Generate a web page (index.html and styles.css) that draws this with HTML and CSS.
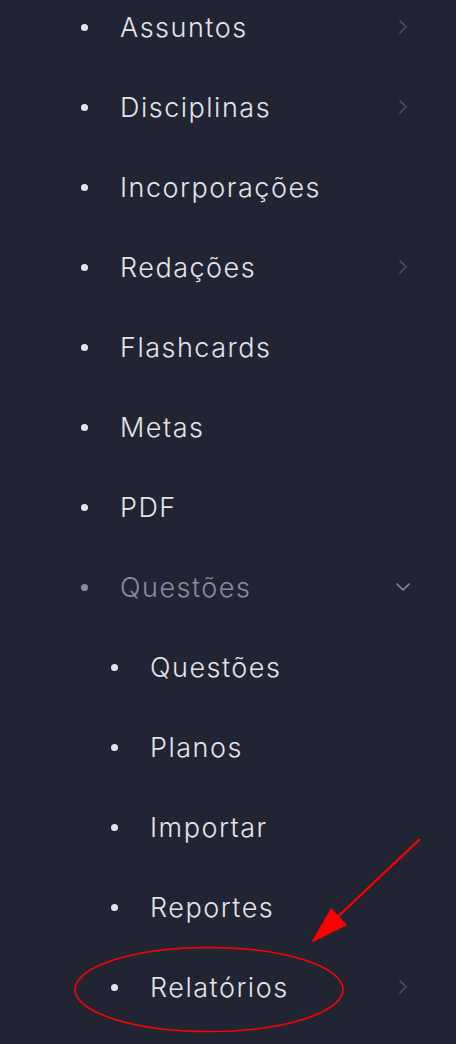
FILE: index.html
```html
<!DOCTYPE html>
<html lang="pt">
<head>
<meta charset="utf-8">
<link rel="stylesheet" href="styles.css">
</head>
<body>
<nav class="menu">
  <ul class="list">
    <li class="item"><span class="dot"></span><span class="label">Assuntos</span><svg class="chev" viewBox="0 0 10 16"><path d="M1.5 1.5 L8 8 L1.5 14.5"/></svg></li>
    <li class="item"><span class="dot"></span><span class="label">Disciplinas</span><svg class="chev" viewBox="0 0 10 16"><path d="M1.5 1.5 L8 8 L1.5 14.5"/></svg></li>
    <li class="item"><span class="dot"></span><span class="label">Incorporações</span></li>
    <li class="item"><span class="dot"></span><span class="label">Redações</span><svg class="chev" viewBox="0 0 10 16"><path d="M1.5 1.5 L8 8 L1.5 14.5"/></svg></li>
    <li class="item"><span class="dot"></span><span class="label">Flashcards</span></li>
    <li class="item"><span class="dot"></span><span class="label">Metas</span></li>
    <li class="item"><span class="dot"></span><span class="label">PDF</span></li>
    <li class="item active"><span class="dot"></span><span class="label">Questões</span><svg class="chev down" viewBox="0 0 16 10"><path d="M1.5 1.5 L8 8 L14.5 1.5"/></svg></li>
    <li class="item sub"><span class="dot"></span><span class="label">Questões</span></li>
    <li class="item sub"><span class="dot"></span><span class="label">Planos</span></li>
    <li class="item sub"><span class="dot"></span><span class="label">Importar</span></li>
    <li class="item sub"><span class="dot"></span><span class="label">Reportes</span></li>
    <li class="item sub"><span class="dot"></span><span class="label">Relatórios</span><svg class="chev" viewBox="0 0 10 16"><path d="M1.5 1.5 L8 8 L1.5 14.5"/></svg></li>
  </ul>
</nav>
<svg class="annot" viewBox="0 0 456 1044" width="456" height="1044">
  <ellipse cx="209" cy="989.5" rx="134" ry="42" fill="none" stroke="#ff0000" stroke-width="1.6"/>
  <line x1="420" y1="839" x2="330" y2="924" stroke="#ff0000" stroke-width="2.2"/>
  <polygon points="311,943 331,908 347,925" fill="#ff0000"/>
</svg>
</body>
</html>
```
FILE: styles.css
```css
html, body {
  margin: 0;
  padding: 0;
  background: #212433;
  width: 456px;
  height: 1044px;
  overflow: hidden;
  position: relative;
}
.menu {
  font-family: "Inter", "Noto Sans", sans-serif;
}
.list {
  list-style: none;
  margin: -13px 0 0 0;
  padding: 0;
}
.item {
  height: 80px;
  display: flex;
  align-items: center;
  padding-left: 81px;
  padding-right: 48px;
  color: #e4e4ea;
  font-size: 27px;
  font-weight: 300;
  letter-spacing: 1.5px;
}
.item.sub {
  padding-left: 111px;
}
.dot {
  width: 7px;
  height: 7px;
  border-radius: 50%;
  background: currentColor;
  flex: none;
  margin-right: 32px;
}
.label {
  flex: 1;
}
.active {
  color: #8a8ba6;
}
.chev {
  width: 10px;
  height: 16px;
  flex: none;
  fill: none;
  stroke: #4a4d68;
  stroke-width: 1.5;
}
.chev.down {
  width: 16px;
  height: 10px;
  margin-right: -3px;
  stroke: #8a8ba6;
}
.annot {
  position: absolute;
  left: 0;
  top: 0;
  pointer-events: none;
}
```
